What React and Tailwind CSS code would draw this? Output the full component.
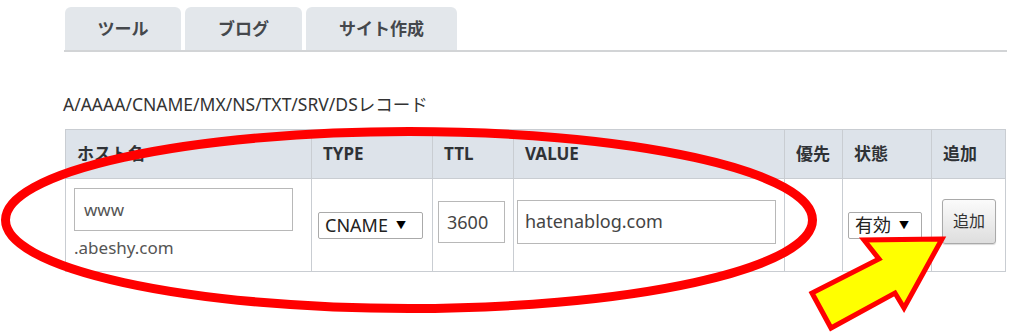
import React from "react";

const sans = { fontFamily: '"Noto Sans", "Noto Sans CJK JP", sans-serif' };

function Tab({ label, w }) {
  return (
    <div
      className={`h-[43px] ${w} bg-[#e3e7eb] rounded-t-[6px] flex items-center justify-center text-[17px] font-bold text-[#45484c]`}
    >
      {label}
    </div>
  );
}

export default function App() {
  return (
    <div className="relative w-[1024px] h-[334px] bg-white overflow-hidden text-[#333]" style={sans}>
      <div className="pl-[65px] pt-[7px]">
        <div className="flex gap-[4px] items-end">
          <Tab label="ツール" w="w-[116px]" />
          <Tab label="ブログ" w="w-[117px]" />
          <Tab label="サイト作成" w="w-[151px]" />
        </div>
        <div className="h-[2px] w-[943px] -ml-[1px] bg-[#d2d4d6]" />

        <div className="mt-[40px] text-[17.5px] leading-[24px] text-[#333] -ml-[2px]">
          A/AAAA/CNAME/MX/NS/TXT/SRV/DSレコード
        </div>

        <table className="mt-[13px] border-collapse table-fixed w-[940px] text-[#333]">
          <colgroup>
            <col className="w-[246px]" />
            <col className="w-[121px]" />
            <col className="w-[81px]" />
            <col className="w-[271px]" />
            <col className="w-[58px]" />
            <col className="w-[89px]" />
            <col className="w-[74px]" />
          </colgroup>
          <thead>
            <tr className="h-[49px] bg-[#dde3ea]">
              {["ホスト名", "TYPE", "TTL", "VALUE", "優先", "状態", "追加"].map((h) => (
                <th
                  key={h}
                  className="border border-[#c9cdd2] text-left pl-[11px] text-[17px] font-bold text-[#2f3236] align-middle"
                >
                  {h}
                </th>
              ))}
            </tr>
          </thead>
          <tbody>
            <tr className="h-[93px]">
              <td className="border border-[#c9cdd2] align-top pl-[8px] pt-[9px]">
                <div className="w-[219px] h-[43px] border border-[#b8b8b8] flex items-center pl-[9px] text-[17px] text-[#555]">
                  www
                </div>
                <div className="mt-[4px] text-[17px] leading-[25px] text-[#555]">.abeshy.com</div>
              </td>
              <td className="border border-[#c9cdd2] align-middle pl-[6px]">
                <div className="w-[105px] h-[27px] border border-[#aaa] rounded-[2px] flex items-center pl-[6px] text-[18px] text-[#222]">
                  CNAME
                  <span className="ml-[8px] text-[10px] text-black">▼</span>
                </div>
              </td>
              <td className="border border-[#c9cdd2] align-middle pl-[5px]">
                <div className="w-[67px] h-[42px] -mt-[6px] border border-[#b8b8b8] flex items-center pl-[8px] text-[18px] text-[#444]">
                  3600
                </div>
              </td>
              <td className="border border-[#c9cdd2] align-middle pl-[3px]">
                <div className="w-[259px] h-[44px] -mt-[7px] border border-[#b8b8b8] flex items-center pl-[7px] text-[18px] text-[#444]">
                  hatenablog.com
                </div>
              </td>
              <td className="border border-[#c9cdd2]" />
              <td className="border border-[#c9cdd2] align-middle pl-[5px]">
                <div className="w-[74px] h-[27px] border border-[#aaa] rounded-[2px] flex items-center pl-[6px] text-[18px] text-[#222]">
                  有効
                  <span className="ml-[8px] text-[10px] text-black">▼</span>
                </div>
              </td>
              <td className="border border-[#c9cdd2] align-middle pl-[10px]">
                <div className="w-[54px] h-[45px] -mt-[8px] border border-[#a9a9a9] rounded-[3px] bg-gradient-to-b from-[#fbfbfb] to-[#dedede] flex items-center justify-center text-[16px] text-[#333] shadow-[0_1px_1px_rgba(0,0,0,0.15)]">
                  追加
                </div>
              </td>
            </tr>
          </tbody>
        </table>
      </div>

      <svg className="absolute inset-0 pointer-events-none" width="1024" height="334" viewBox="0 0 1024 334">
        <ellipse cx="409" cy="220" rx="403.5" ry="88.5" fill="none" stroke="#ff0000" strokeWidth="9" />
        <polygon
          points="942,239 864,240 879,259 812,293 831,328 895,293 904,308"
          fill="#ffff00"
          stroke="#ff0000"
          strokeWidth="5"
          strokeLinejoin="miter"
        />
      </svg>
    </div>
  );
}
